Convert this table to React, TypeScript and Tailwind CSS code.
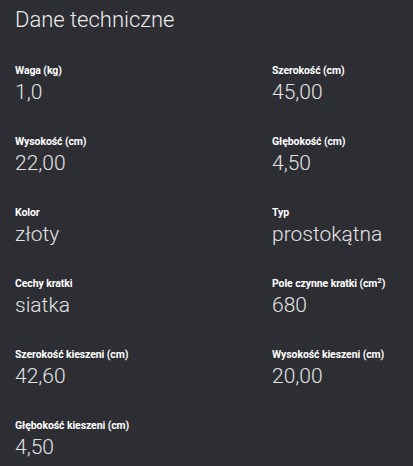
const specs: { label: React.ReactNode; value: string }[] = [
  { label: "Waga (kg)", value: "1,0" },
  { label: "Szerokość (cm)", value: "45,00" },
  { label: "Wysokość (cm)", value: "22,00" },
  { label: "Głębokość (cm)", value: "4,50" },
  { label: "Kolor", value: "złoty" },
  { label: "Typ", value: "prostokątna" },
  { label: "Cechy kratki", value: "siatka" },
  {
    label: (
      <>
        Pole czynne kratki (cm<sup className="text-[8px]">2</sup>)
      </>
    ),
    value: "680",
  },
  { label: "Szerokość kieszeni (cm)", value: "42,60" },
  { label: "Wysokość kieszeni (cm)", value: "20,00" },
  { label: "Głębokość kieszeni (cm)", value: "4,50" },
];

export default function App() {
  return (
    <div
      className="w-[413px] h-[466px] bg-[#2d2e33] px-[15px] pt-[5px] overflow-hidden"
      style={{ fontFamily: "Roboto, 'Liberation Sans', sans-serif" }}
    >
      <h2 className="text-[22px] font-light text-[#ececec] leading-[30px]">Dane techniczne</h2>
      <div className="grid grid-cols-[257px_1fr] mt-[29px] gap-y-[28px]">
        {specs.map((s, i) => (
          <div key={i} className="flex flex-col">
            <span className="text-[10.5px] font-bold text-white leading-[14px] tracking-[-0.1px]">{s.label}</span>
            <span className="text-[21px] font-light text-[#e2e2e2] leading-[29px]">{s.value}</span>
          </div>
        ))}
      </div>
    </div>
  );
}
